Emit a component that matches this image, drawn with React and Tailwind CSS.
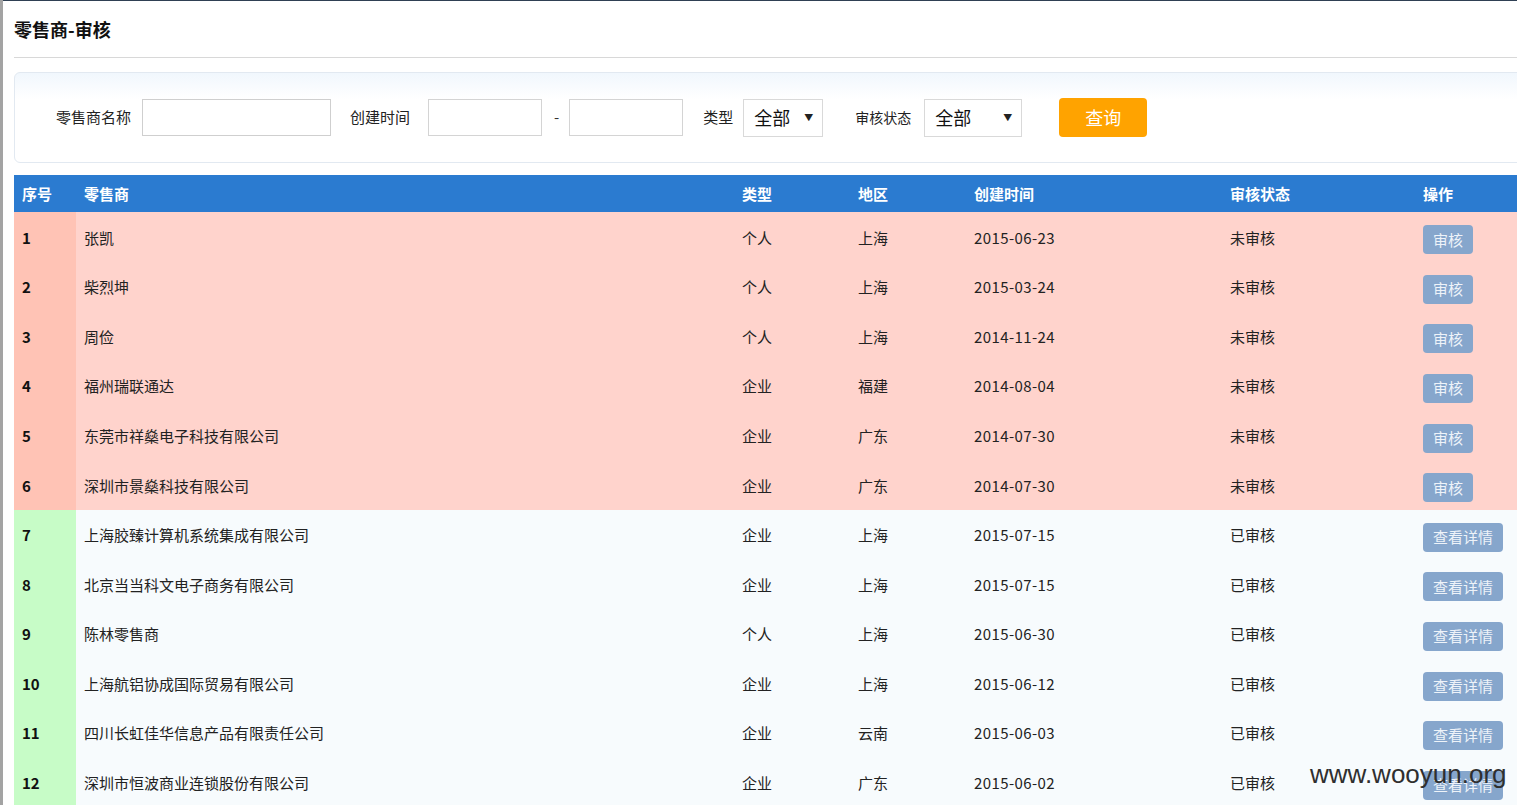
import React from "react";

const rows = [
  ["1", "张凯", "个人", "上海", "2015-06-23", "未审核"],
  ["2", "柴烈坤", "个人", "上海", "2015-03-24", "未审核"],
  ["3", "周俭", "个人", "上海", "2014-11-24", "未审核"],
  ["4", "福州瑞联通达", "企业", "福建", "2014-08-04", "未审核"],
  ["5", "东莞市祥燊电子科技有限公司", "企业", "广东", "2014-07-30", "未审核"],
  ["6", "深圳市景燊科技有限公司", "企业", "广东", "2014-07-30", "未审核"],
  ["7", "上海胶臻计算机系统集成有限公司", "企业", "上海", "2015-07-15", "已审核"],
  ["8", "北京当当科文电子商务有限公司", "企业", "上海", "2015-07-15", "已审核"],
  ["9", "陈林零售商", "个人", "上海", "2015-06-30", "已审核"],
  ["10", "上海航铝协成国际贸易有限公司", "企业", "上海", "2015-06-12", "已审核"],
  ["11", "四川长虹佳华信息产品有限责任公司", "企业", "云南", "2015-06-03", "已审核"],
  ["12", "深圳市恒波商业连锁股份有限公司", "企业", "广东", "2015-06-02", "已审核"],
];

function Select() {
  return (
    <div className="h-[38px] bg-white border border-[#d9d9d9] flex items-center justify-between pl-[10px] pr-[9px]">
      <span className="text-[18px] text-[#111]">全部</span>
      <span className="text-[9px] text-[#222]">▼</span>
    </div>
  );
}

export default function App() {
  return (
    <div
      className="relative h-[805px] w-[1517px] overflow-hidden bg-white flex text-[#222]"
      style={{ fontFamily: '"Noto Sans CJK SC", "Noto Sans", sans-serif' }}
    >
      {/* left frame edge */}
      <div className="w-[3px] bg-[#a3a3a3] shrink-0" />
      <div className="flex-1 border-t border-[#2f4054] pl-[11px] overflow-hidden">
        <div className="w-[1540px]">
          <h1 className="h-[57px] flex items-center text-[18px] font-bold text-[#111] border-b border-[#d8d8d8]">
            零售商-审核
          </h1>

          {/* filter panel */}
          <div className="mt-[14px] h-[91px] rounded-md border border-[#e2e9f1] bg-linear-to-b from-[#f1f7fd] via-white via-30% to-white flex items-center pl-[41px] text-[15px]">
            <span className="text-[#222]">零售商名称</span>
            <div className="ml-[11px] w-[189px] h-[37px] bg-white border border-[#cfcfcf]" />
            <span className="ml-[19px] text-[#222]">创建时间</span>
            <div className="ml-[18px] w-[114px] h-[37px] bg-white border border-[#d4d4d4]" />
            <span className="ml-[12px] text-[#333]">-</span>
            <div className="ml-[10px] w-[114px] h-[37px] bg-white border border-[#d4d4d4]" />
            <span className="ml-[20px] text-[#222]">类型</span>
            <div className="ml-[10px] w-[80px]">
              <Select />
            </div>
            <span className="ml-[32px] text-[14px] text-[#222]">审核状态</span>
            <div className="ml-[13px] w-[98px]">
              <Select />
            </div>
            <button className="ml-[37px] w-[88px] h-[39px] rounded-[4px] bg-[#ffa300] text-white text-[18px]">
              查询
            </button>
          </div>

          {/* table */}
          <table className="mt-[12px] w-full border-collapse text-[15px] table-fixed">
            <colgroup>
              <col className="w-[62px]" />
              <col className="w-[658px]" />
              <col className="w-[116px]" />
              <col className="w-[116px]" />
              <col className="w-[256px]" />
              <col className="w-[193px]" />
              <col />
            </colgroup>
            <thead>
              <tr className="h-[37px] bg-[#2b7bd0] text-white font-bold text-left">
                <th className="pl-[8px] pt-[2px]">序号</th>
                <th className="pl-[8px] pt-[2px]">零售商</th>
                <th className="pl-[8px] pt-[2px]">类型</th>
                <th className="pl-[8px] pt-[2px]">地区</th>
                <th className="pl-[8px] pt-[2px]">创建时间</th>
                <th className="pl-[8px] pt-[2px]">审核状态</th>
                <th className="pl-[8px] pt-[2px]">操作</th>
              </tr>
            </thead>
            <tbody>
              {rows.map((r) => {
                const pending = r[5] === "未审核";
                return (
                  <tr
                    key={r[0]}
                    className={`h-[49.6px] ${pending ? "bg-[#ffd3cc]" : "bg-[#f7fbfd]"}`}
                  >
                    <td
                      className={`pl-[8px] pt-[2px] font-bold text-[#111] ${pending ? "bg-[#ffc3b5]" : "bg-[#c7fcc7]"}`}
                    >
                      {r[0]}
                    </td>
                    <td className="pl-[8px] pt-[2px]">{r[1]}</td>
                    <td className="pl-[8px] pt-[2px]">{r[2]}</td>
                    <td className="pl-[8px] pt-[2px]">{r[3]}</td>
                    <td className="pl-[8px] pt-[2px] tracking-[0.4px]">{r[4]}</td>
                    <td className="pl-[8px] pt-[2px]">{r[5]}</td>
                    <td className="pl-[8px]">
                      <button
                        className={`h-[29px] mt-[6px] rounded-[4px] bg-[#86a6cc] text-[#eef3f9] text-[15px] ${pending ? "w-[50px]" : "w-[80px]"}`}
                      >
                        {pending ? "审核" : "查看详情"}
                      </button>
                    </td>
                  </tr>
                );
              })}
            </tbody>
          </table>
        </div>
      </div>

      {/* watermark */}
      <div
        className="absolute left-[1310px] top-[761px] text-[26px] text-[#2f2f2f] leading-none"
        style={{ fontFamily: '"Liberation Sans", Arial, sans-serif' }}
      >
        www.wooyun.org
      </div>
    </div>
  );
}
